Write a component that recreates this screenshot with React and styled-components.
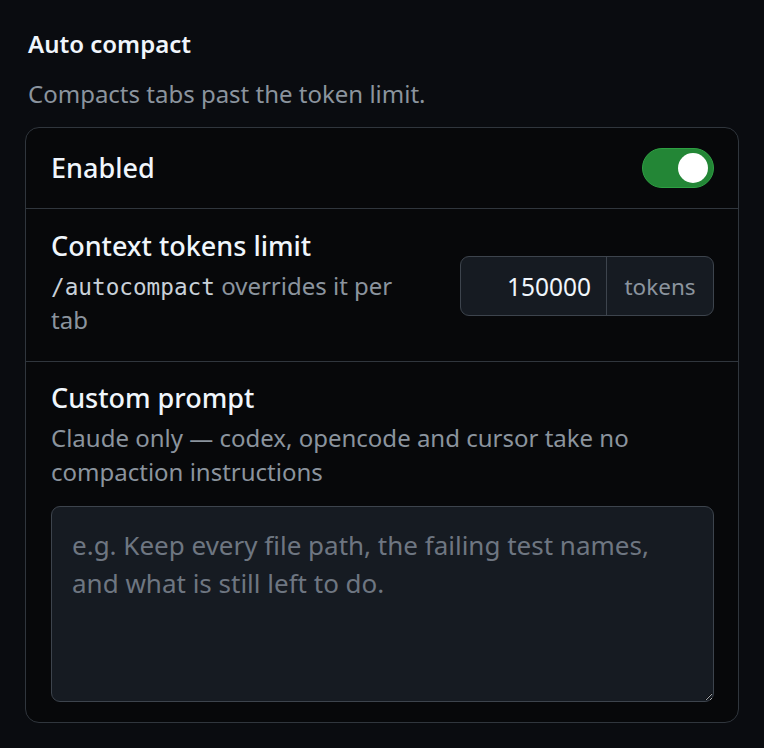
import { useState } from 'react';
import styled, { createGlobalStyle } from 'styled-components';

const GlobalStyle = createGlobalStyle`
  html, body {
    margin: 0;
    background: #0a0c10;
    font-family: 'Noto Sans', sans-serif;
    color: #e6edf3;
  }
  * { box-sizing: border-box; }
`;

const Page = styled.div`
  padding: 28px 25px 26px;
`;

const SectionTitle = styled.h2`
  margin: 0 0 0 3px;
  font-size: 24px;
  line-height: 32px;
  font-weight: 600;
  color: #f0f6fc;
`;

const SectionDesc = styled.p`
  margin: 17px 0 16px 3px;
  font-size: 24px;
  line-height: 34px;
  color: #8b949e;
`;

const Card = styled.div`
  border: 1.5px solid #30363d;
  border-radius: 14px;
  background: #07080a;
  overflow: hidden;
`;

const Row = styled.div`
  display: flex;
  flex-direction: ${(p) => (p.$stack ? 'column' : 'row')};
  align-items: ${(p) => (p.$stack ? 'stretch' : 'center')};
  justify-content: space-between;
  gap: ${(p) => (p.$stack ? '17px' : '30px')};
  padding: ${(p) => p.$pad};
  border-top: ${(p) => (p.$first ? 'none' : '1.5px solid #30363d')};
`;

const Label = styled.div`
  display: flex;
  flex-direction: column;
  gap: 4px;
  max-width: ${(p) => p.$max || 'none'};
`;

const RowTitle = styled.div`
  font-size: 27px;
  line-height: 38px;
  font-weight: 500;
  color: #f0f6fc;
`;

const RowDesc = styled.div`
  font-size: 24px;
  line-height: 34px;
  color: #8b949e;
`;

const Code = styled.code`
  font-family: 'DejaVu Sans Mono', monospace;
  font-size: 22.7px;
  line-height: 1;
  color: #c9d1d9;
`;

const Switch = styled.button`
  width: 72px;
  height: 40px;
  border-radius: 20px;
  border: 1.5px solid #2ea043;
  background: ${(p) => (p.$on ? '#238636' : '#30363d')};
  display: flex;
  align-items: center;
  justify-content: ${(p) => (p.$on ? 'flex-end' : 'flex-start')};
  padding: 0 5px;
  cursor: pointer;
`;

const Knob = styled.span`
  width: 30px;
  height: 30px;
  border-radius: 50%;
  background: #ffffff;
`;

const InputGroup = styled.div`
  display: flex;
  width: 254px;
  height: 60px;
  margin-top: 8px;
  border: 1.5px solid #3d444d;
  border-radius: 9px;
  background: #161b22;
  overflow: hidden;
  flex-shrink: 0;
`;

const NumberInput = styled.input`
  width: 146px;
  border: none;
  border-right: 1.5px solid #3d444d;
  background: transparent;
  color: #f0f6fc;
  font-family: 'Noto Sans', sans-serif;
  font-size: 24.5px;
  text-align: right;
  padding: 0 15px 0 8px;
  outline: none;
`;

const Suffix = styled.span`
  flex: 1;
  display: flex;
  align-items: center;
  justify-content: center;
  font-size: 22.5px;
  color: #8b949e;
`;

const TextArea = styled.textarea`
  width: 100%;
  height: 196px;
  border: 1.5px solid #3d444d;
  border-radius: 9px;
  background: #161b22;
  color: #e6edf3;
  font-family: 'Noto Sans', sans-serif;
  font-size: 26px;
  line-height: 38px;
  padding: 19px 20px;
  resize: vertical;
  outline: none;
  &::placeholder {
    color: #6e7681;
  }
`;

export default function App() {
  const [on, setOn] = useState(true);
  const [limit, setLimit] = useState('150000');

  return (
    <Page>
      <GlobalStyle />
      <SectionTitle>Auto compact</SectionTitle>
      <SectionDesc>Compacts tabs past the token limit.</SectionDesc>
      <Card>
        <Row $first $pad="20px 24px 20px 25px">
          <RowTitle>Enabled</RowTitle>
          <Switch $on={on} onClick={() => setOn(!on)}>
            <Knob />
          </Switch>
        </Row>
        <Row $pad="18px 24px 24px 25px">
          <Label $max="365px">
            <RowTitle>Context tokens limit</RowTitle>
            <RowDesc>
              <Code>/autocompact</Code> overrides it per tab
            </RowDesc>
          </Label>
          <InputGroup>
            <NumberInput value={limit} onChange={(e) => setLimit(e.target.value)} />
            <Suffix>tokens</Suffix>
          </InputGroup>
        </Row>
        <Row $stack $pad="17px 24px 20px 25px">
          <Label>
            <RowTitle>Custom prompt</RowTitle>
            <RowDesc>
              Claude only — codex, opencode and cursor take no compaction instructions
            </RowDesc>
          </Label>
          <TextArea placeholder="e.g. Keep every file path, the failing test names, and what is still left to do." />
        </Row>
      </Card>
    </Page>
  );
}
